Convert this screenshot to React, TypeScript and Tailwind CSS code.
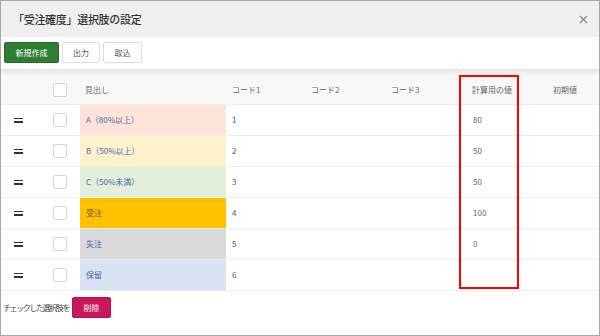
import React from "react";

const rows = [
  { id: 1, label: "A（80%以上）", bg: "bg-[#fde3d8]", fg: "text-[#4a68ad]", code: "1", calc: "80" },
  { id: 2, label: "B（50%以上）", bg: "bg-[#fff1cc]", fg: "text-[#4a68ad]", code: "2", calc: "50" },
  { id: 3, label: "C（50%未満）", bg: "bg-[#e2efda]", fg: "text-[#4a68ad]", code: "3", calc: "50" },
  { id: 4, label: "受注", bg: "bg-[#ffc000]", fg: "text-[#6a5b3a]", code: "4", calc: "100" },
  { id: 5, label: "失注", bg: "bg-[#d9d9d9]", fg: "text-[#4a68ad]", code: "5", calc: "0" },
  { id: 6, label: "保留", bg: "bg-[#dae3f3]", fg: "text-[#4a68ad]", code: "6", calc: "" },
];

function Check() {
  return <div className="w-[14px] h-[14px] rounded-[2px] border border-[#d4d4d4] bg-white" />;
}

function Handle() {
  return (
    <div className="flex flex-col gap-[2px] w-[9px]">
      <div className="h-[1.5px] bg-[#333]" />
      <div className="h-[1.5px] bg-[#333]" />
    </div>
  );
}

export default function App() {
  return (
    <div
      className="relative w-[600px] h-[336px] border border-[#a8a8a8] bg-white flex flex-col overflow-hidden"
      style={{ fontFamily: '"Noto Sans CJK JP", "Noto Sans", sans-serif' }}
    >
      {/* title bar */}
      <div className="h-[36px] bg-[#efefef] flex items-center justify-between pl-[12px] pr-[11px]">
        <h1 className="text-[11px] font-medium text-[#333] tracking-[-0.3px]">「受注確度」選択肢の設定</h1>
        <svg width="9" height="9" viewBox="0 0 9 9" className="text-[#888]">
          <path d="M1 1L8 8M8 1L1 8" stroke="currentColor" strokeWidth="1.2" />
        </svg>
      </div>

      {/* toolbar */}
      <div className="h-[32px] flex items-start gap-[3px] pt-[5px] pl-[3px] text-[8px]">
        <button className="h-[21px] w-[55px] rounded-[2px] bg-[#2e7d32] border border-[#276b2b] text-white">新規作成</button>
        <button className="h-[21px] w-[38px] rounded-[2px] bg-white border border-[#ddd] text-[#555]">出力</button>
        <button className="h-[21px] w-[39px] rounded-[2px] bg-white border border-[#ddd] text-[#555]">取込</button>
      </div>
      <div className="h-[7px] bg-gradient-to-b from-[#e4e4e4] to-[#f8f8f8]" />

      {/* table */}
      <div className="text-[8px]">
        <div className="h-[29px] flex items-center bg-[#f8f8f8] border-b border-[#eee] text-[#666]">
          <div className="w-[52px]" />
          <div className="w-[27px]"><Check /></div>
          <div className="w-[147px] pl-[5px]">見出し</div>
          <div className="w-[80px] pl-[5px]">コード1</div>
          <div className="w-[80px] pl-[4px]">コード2</div>
          <div className="w-[80px] pl-[4px]">コード3</div>
          <div className="w-[80px] pl-[5px]">計算用の値</div>
          <div className="flex-1 pl-[6px]">初期値</div>
        </div>
        {rows.map((r) => (
          <div key={r.id} className="h-[31px] flex items-stretch border-b border-[#eee]">
            <div className="w-[52px] pl-[13px] flex items-center"><Handle /></div>
            <div className="w-[27px] flex items-center"><Check /></div>
            <div className={`w-[146px] pl-[6px] flex items-center ${r.bg} ${r.fg}`}>{r.label}</div>
            <div className="w-[81px] pl-[6px] flex items-center text-[#555]">{r.code}</div>
            <div className="w-[80px]" />
            <div className="w-[80px]" />
            <div className="w-[80px] pl-[6px] flex items-center text-[#666]">{r.calc}</div>
            <div className="flex-1" />
          </div>
        ))}
      </div>

      {/* footer */}
      <div className="flex items-center gap-[3px] pt-[6px] pl-[2px] text-[8px]">
        <span className="text-[#444] tracking-[-1.4px]">チェックした選択肢を</span>
        <button className="h-[21px] w-[39px] rounded-[2px] bg-[#c8175d] border border-[#b01450] text-white">削除</button>
      </div>

      {/* highlight annotation */}
      <div className="absolute left-[458px] top-[74px] w-[60px] h-[214px] border-2 border-[#ff0000]" />
    </div>
  );
}
